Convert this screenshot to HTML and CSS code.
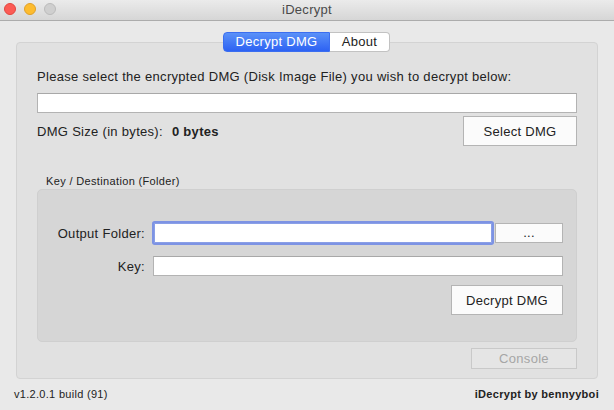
FILE: index.html
```html
<!DOCTYPE html>
<html>
<head>
<meta charset="utf-8">
<title>iDecrypt</title>
<link rel="stylesheet" href="styles.css">
</head>
<body>
<div class="window">
  <header class="titlebar">
    <div class="lights">
      <span class="light red"></span>
      <span class="light yellow"></span>
      <span class="light gray"></span>
    </div>
    <div class="title">iDecrypt</div>
    <div></div>
  </header>
  <main class="content">
    <div class="tabs">
      <span class="tab active">Decrypt DMG</span>
      <span class="tab">About</span>
    </div>
    <section class="tabbox">
      <p class="prompt">Please select the encrypted DMG (Disk Image File) you wish to decrypt below:</p>
      <div class="field wide"></div>
      <div class="size-row">
        <span class="size-label">DMG Size (in bytes):</span>
        <span class="size-value">0 bytes</span>
        <button class="btn select">Select DMG</button>
      </div>
      <div class="group-title">Key / Destination (Folder)</div>
      <div class="group">
        <div class="form">
          <label class="lbl">Output Folder:</label>
          <div class="out-row">
            <div class="field focus"></div>
            <button class="btn dots">...</button>
          </div>
          <label class="lbl">Key:</label>
          <div class="field"></div>
        </div>
        <div class="actions">
          <button class="btn decrypt">Decrypt DMG</button>
        </div>
      </div>
      <div class="console-row">
        <button class="btn console" disabled>Console</button>
      </div>
    </section>
    <footer class="footer">
      <span class="version">v1.2.0.1 build (91)</span>
      <span class="credit">iDecrypt by bennyyboi</span>
    </footer>
  </main>
</div>
</body>
</html>
```

FILE: styles.css
```css
* { box-sizing: border-box; }
html, body {
  margin: 0;
  padding: 0;
  width: 614px;
  height: 410px;
  overflow: hidden;
  background: #e9e9e9;
  font-family: "Liberation Sans", Arial, sans-serif;
  color: #222;
  letter-spacing: 0.3px;
}
.window {
  width: 614px;
  height: 410px;
  display: flex;
  flex-direction: column;
}
.titlebar {
  height: 21px;
  display: grid;
  grid-template-columns: 1fr auto 1fr;
  align-items: center;
  background: linear-gradient(#ebebeb, #d6d6d6);
  border-bottom: 1px solid #acacac;
}
.lights {
  display: flex;
  gap: 8px;
  padding-left: 4px;
  margin-top: -2px;
}
.light {
  width: 12px;
  height: 12px;
  border-radius: 50%;
  display: block;
}
.red { background: #fc5b55; border: 1px solid #e2463f; }
.yellow { background: #fdbc2f; border: 1px solid #e0a028; }
.gray { background: #cfcfcf; border: 1px solid #bbbbbb; }
.title {
  font-size: 13px;
  color: #4a4a4a;
  margin-top: -1px;
}
.content {
  flex: 1;
  display: flex;
  flex-direction: column;
  padding: 11px 16px 0 16px;
}
.tabs {
  display: flex;
  justify-content: center;
  margin-bottom: -10px;
  position: relative;
  z-index: 1;
  margin-left: -1px;
}
.tab {
  height: 20px;
  line-height: 18px;
  font-size: 13px;
  background: #fff;
  border: 1px solid #c2c2c2;
  border-left: none;
  border-radius: 0 4px 4px 0;
  width: 60px;
  text-align: center;
  color: #222;
}
.tab.active {
  width: 107px;
  color: #fff;
  background: linear-gradient(#5a91f8, #2d62f3);
  border: 1px solid #3b6ef0;
  border-radius: 4px 0 0 4px;
}
.tabbox {
  background: #e1e1e1;
  border: 1px solid #d3d3d3;
  border-radius: 4px;
  height: 337px;
  padding: 26px 20px 9px 20px;
  display: flex;
  flex-direction: column;
}
.prompt {
  margin: 0;
  font-size: 13px;
  line-height: 16px;
}
.field {
  height: 20px;
  background: #fff;
  border: 1px solid #b3b3b3;
  border-top-color: #a8a8a8;
}
.field.wide {
  height: 21px;
  margin-top: 8px;
}
.size-row {
  display: flex;
  align-items: center;
  margin-top: 3px;
  font-size: 13px;
}
.size-value {
  font-weight: bold;
  margin-left: 9px;
}
.btn {
  font-family: "Liberation Sans", Arial, sans-serif;
  font-size: 13px;
  letter-spacing: 0.3px;
  color: #222;
  background: #fbfbfb;
  border: 1px solid #b4b4b4;
  border-radius: 0;
  padding: 0;
  margin: 0;
}
.btn.select {
  margin-left: auto;
  width: 114px;
  height: 30px;
}
.group-title {
  font-size: 11px;
  line-height: 14px;
  margin-top: 28px;
  padding-left: 9px;
  letter-spacing: 0.35px;
}
.group {
  margin-top: 1px;
  height: 153px;
  background: #d6d6d6;
  border: 1px solid #cfcfcf;
  border-radius: 5px;
  padding: 33px 13px 26px 14px;
  display: flex;
  flex-direction: column;
}
.form {
  display: grid;
  grid-template-columns: 93px 1fr;
  column-gap: 8px;
  row-gap: 13px;
  align-items: center;
}
.lbl {
  font-size: 13px;
  text-align: right;
}
.out-row {
  display: flex;
  gap: 3px;
}
.field.focus {
  flex: 1;
  margin-left: 1px;
  border: 1px solid #8a9fe6;
  box-shadow: 0 0 0 2px #7d93e4;
  border-radius: 1px;
}
.btn.dots {
  width: 68px;
  height: 20px;
  line-height: 14px;
}
.actions {
  display: flex;
  justify-content: flex-end;
  margin-top: 9px;
}
.btn.decrypt {
  width: 112px;
  height: 30px;
}
.console-row {
  display: flex;
  justify-content: flex-end;
  margin-top: 6px;
}
.btn.console {
  width: 106px;
  height: 21px;
  background: #e5e5e5;
  border-color: #c9c9c9;
  color: #a6a6a6;
}
.footer {
  flex: 1;
  display: flex;
  justify-content: space-between;
  align-items: center;
  font-size: 11px;
  margin: 0 -1px 0 -2px;
  padding-bottom: 1px;
}
.credit { font-weight: bold; }
```
